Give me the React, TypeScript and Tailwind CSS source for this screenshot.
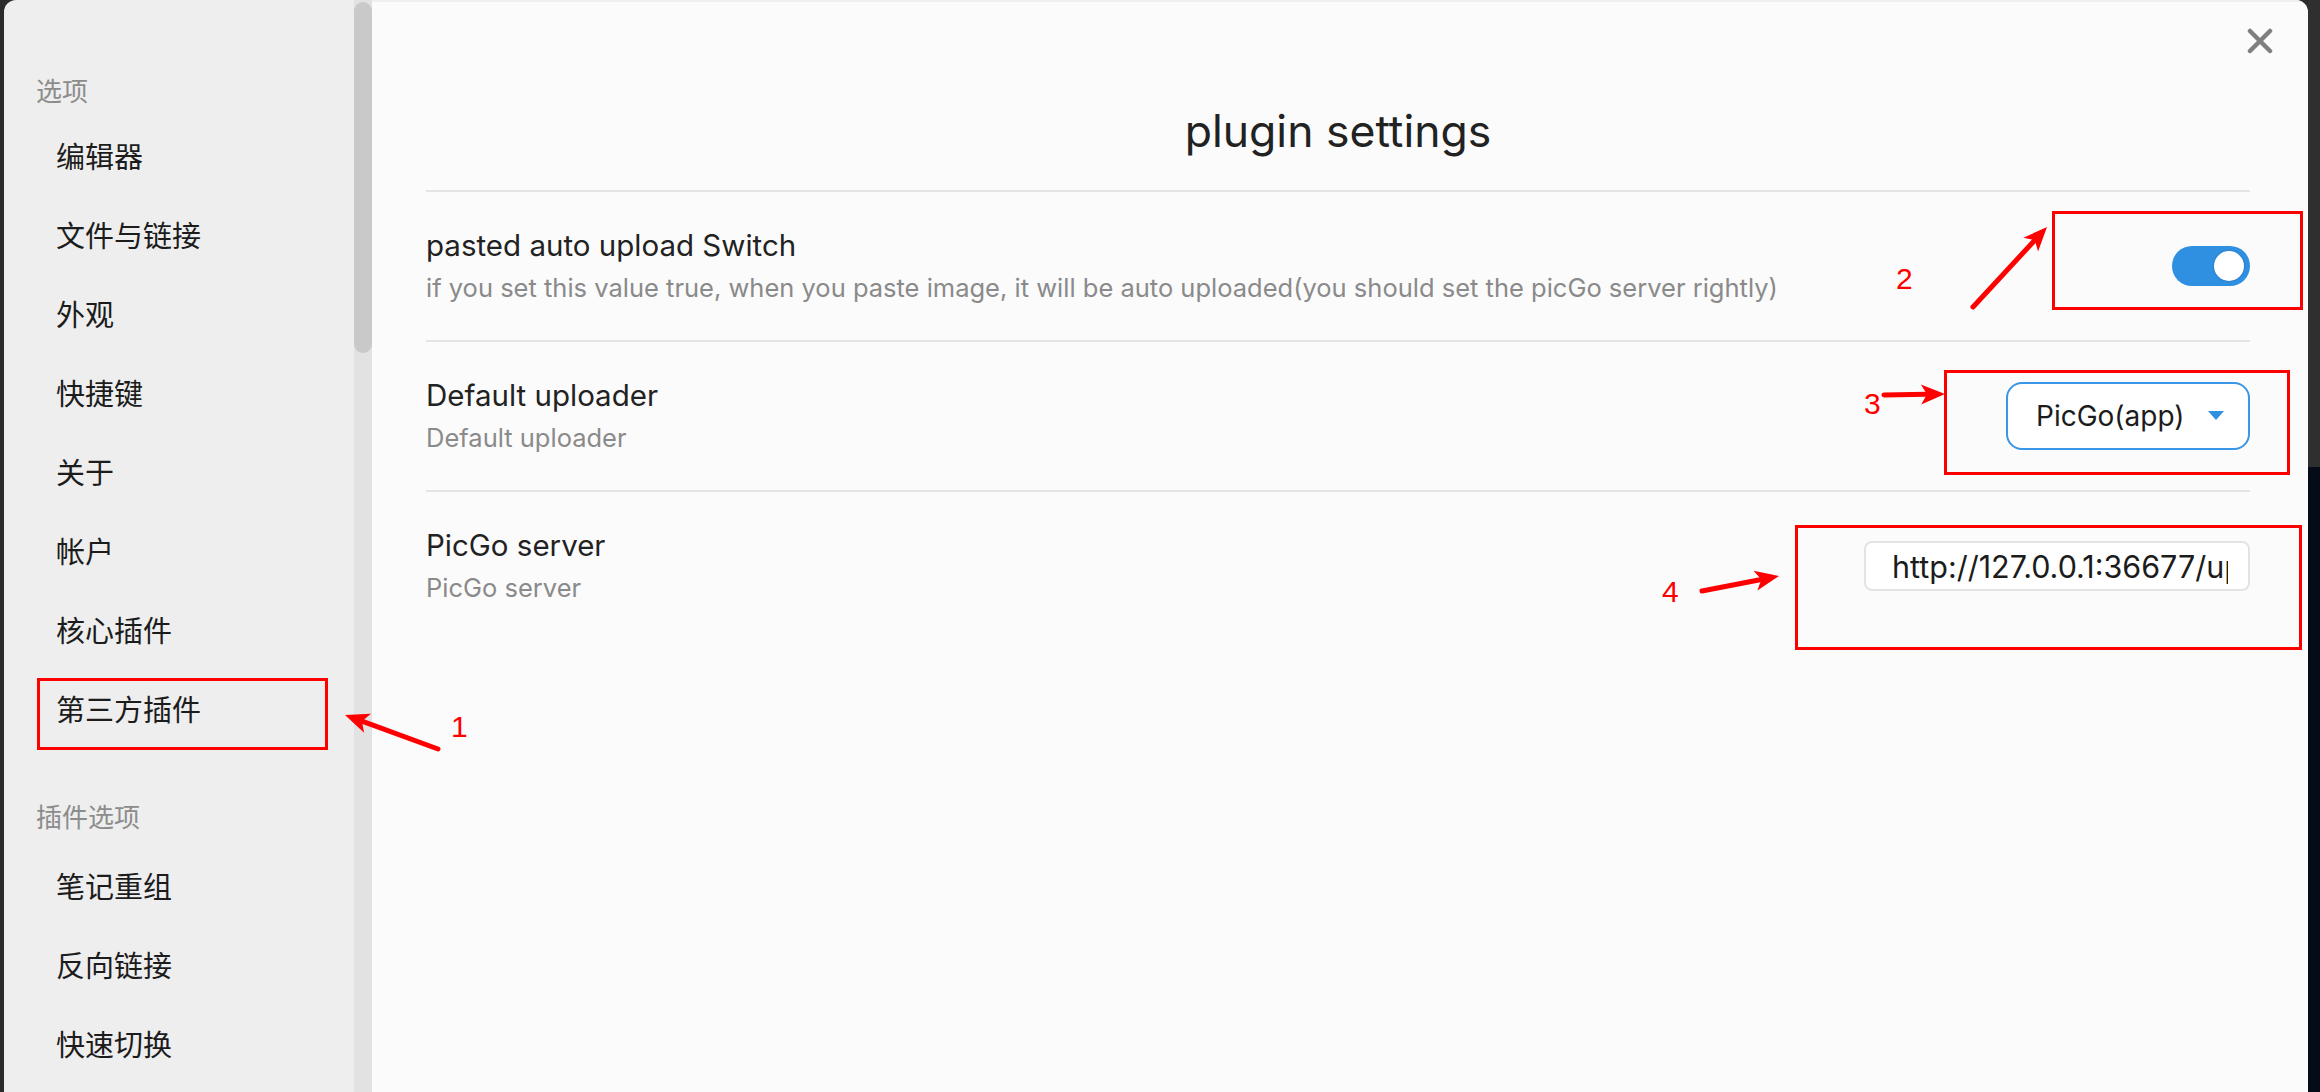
import { useState } from "react";

const cjk = { fontFamily: '"Noto Sans CJK SC", "Noto Sans", sans-serif' };
const ui = { fontFamily: 'Inter, "Noto Sans CJK SC", sans-serif' };

const groups = [
    { title: "选项", items: ["编辑器", "文件与链接", "外观", "快捷键", "关于", "帐户", "核心插件", "第三方插件"] },
    { title: "插件选项", items: ["笔记重组", "反向链接", "快速切换"] },
];

const boxes = [
    { left: 37, top: 678, width: 291, height: 72 },
    { left: 2052, top: 211, width: 251, height: 99 },
    { left: 1944, top: 370, width: 346, height: 105 },
    { left: 1795, top: 525, width: 507, height: 125 },
];

const arrows = [
    { x1: 438, y1: 749, x2: 345, y2: 715 },
    { x1: 1973, y1: 307, x2: 2047, y2: 227 },
    { x1: 1884, y1: 395, x2: 1945, y2: 394 },
    { x1: 1702, y1: 591, x2: 1779, y2: 576 },
];

const labels = [
    { text: "1", left: 451, top: 712 },
    { text: "2", left: 1896, top: 264 },
    { text: "3", left: 1864, top: 389 },
    { text: "4", left: 1662, top: 577 },
];

function Arrow({ x1, y1, x2, y2 }: { x1: number; y1: number; x2: number; y2: number }) {
    const len = Math.hypot(x2 - x1, y2 - y1);
    const ux = (x2 - x1) / len;
    const uy = (y2 - y1) / len;
    const L = 24;
    const W = 10;
    const bx = x2 - ux * L;
    const by = y2 - uy * L;
    const nx = bx + ux * 6;
    const ny = by + uy * 6;
    const pts = `${x2},${y2} ${bx - uy * W},${by + ux * W} ${nx},${ny} ${bx + uy * W},${by - ux * W}`;
    return (
        <g>
            <line x1={x1} y1={y1} x2={nx} y2={ny} stroke="#ff0000" strokeWidth={5} strokeLinecap="round" />
            <polygon points={pts} fill="#ff0000" />
        </g>
    );
}

function SettingRow({ name, desc, children }: { name: string; desc: string; children: React.ReactNode }) {
    return (
        <div className="h-[150px] border-t-2 border-[#e4e4e4] flex items-center justify-between">
            <div>
                <div className="text-[29.5px] leading-[36px] text-[#222222]">{name}</div>
                <div className="text-[25.5px] leading-[36px] mt-[7px] text-[#8a8a8a]">{desc}</div>
            </div>
            {children}
        </div>
    );
}

export default function App() {
    const [on, setOn] = useState(true);

    return (
        <div className="w-[2320px] h-[1092px] relative overflow-hidden flex bg-[#2b2b2b]" style={ui}>
            <div className="w-[4px] bg-[#2a2a2a]" />

            {/* modal */}
            <div className="flex-1 flex rounded-t-[12px] overflow-hidden">
                <div className="w-[350px] bg-[#eeeeee] pt-[63px]" style={cjk}>
                    {groups.map((g, gi) => (
                        <div key={g.title} className={gi > 0 ? "mt-[41px]" : ""}>
                            <div className={`pl-[32px] text-[26px] text-[#8c8c8c] flex items-center ${gi > 0 ? "h-[57px] pb-[4px]" : "h-[53px]"}`}>
                                {g.title}
                            </div>
                            {g.items.map((it) => (
                                <div key={it} className="h-[79px] pl-[52px] flex items-center text-[29px] text-[#1c1c1c]">
                                    {it}
                                </div>
                            ))}
                        </div>
                    ))}
                </div>

                <div className="w-[18px] bg-[#e2e2e2] pt-[2px]">
                    <div className="h-[351px] rounded-full bg-[#c9c9c9]" />
                </div>

                <div className="flex-1 bg-[#fbfbfb] relative pl-[54px] pr-[58px] pt-[102px] border-t-2 border-[#efefef]">
                    <button className="absolute top-[26px] right-[35px] w-[26px] h-[26px]">
                        <svg viewBox="0 0 26 26" width="26" height="26">
                            <path d="M3 3 L23 23 M23 3 L3 23" stroke="#7f7f7f" strokeWidth="4.5" strokeLinecap="round" />
                        </svg>
                    </button>

                    <h1 className="text-center text-[44.5px] leading-[54px] text-[#222222] mb-[32px]">plugin settings</h1>

                    <SettingRow
                        name="pasted auto upload Switch"
                        desc="if you set this value true, when you paste image, it will be auto uploaded(you should set the picGo server rightly)"
                    >
                        <button
                            onClick={() => setOn(!on)}
                            className={`w-[78px] h-[40px] rounded-full flex items-center px-[6px] ${on ? "bg-[#2f8fe0] justify-end" : "bg-[#cccccc] justify-start"}`}
                        >
                            <span className="w-[30px] h-[30px] rounded-full bg-white shadow-[0_0_2px_rgba(0,0,0,0.25)]" />
                        </button>
                    </SettingRow>

                    <SettingRow name="Default uploader" desc="Default uploader">
                        <div className="w-[244px] h-[68px] rounded-[16px] border-2 border-[#3a96e8] bg-white flex items-center justify-between pl-[28px] pr-[24px]">
                            <span className="text-[28px] text-[#1c1c1c]">PicGo(app)</span>
                            <svg width="16" height="10" viewBox="0 0 16 10">
                                <path d="M0 0 L16 0 L8 9 Z" fill="#2f8fe0" />
                            </svg>
                        </div>
                    </SettingRow>

                    <SettingRow name="PicGo server" desc="PicGo server">
                        <input
                            readOnly
                            value="http://127.0.0.1:36677/upload"
                            className="w-[386px] h-[50px] rounded-[8px] border-2 border-[#e3e3e3] bg-white pl-[26px] pr-[20px] text-[30.5px] text-[#1c1c1c] outline-none"
                            style={ui}
                        />
                    </SettingRow>
                </div>
            </div>

            <div className="w-[12px] flex flex-col">
                <div className="h-[467px] bg-[#2f2f2f]" />
                <div className="flex-1 bg-[#050b18]" />
            </div>

            {/* screenshot annotations */}
            <div className="absolute inset-0 pointer-events-none">
                {boxes.map((b, i) => (
                    <div key={i} className="absolute border-[3px] border-[#ff0000]" style={b} />
                ))}
                <svg className="absolute inset-0" width="2320" height="1092">
                    {arrows.map((a, i) => (
                        <Arrow key={i} {...a} />
                    ))}
                </svg>
                {labels.map((l) => (
                    <span
                        key={l.text}
                        className="absolute text-[30px] leading-[30px] text-[#ff0000]"
                        style={{ left: l.left, top: l.top, fontFamily: '"Liberation Sans", Arial, sans-serif' }}
                    >
                        {l.text}
                    </span>
                ))}
            </div>
        </div>
    );
}
